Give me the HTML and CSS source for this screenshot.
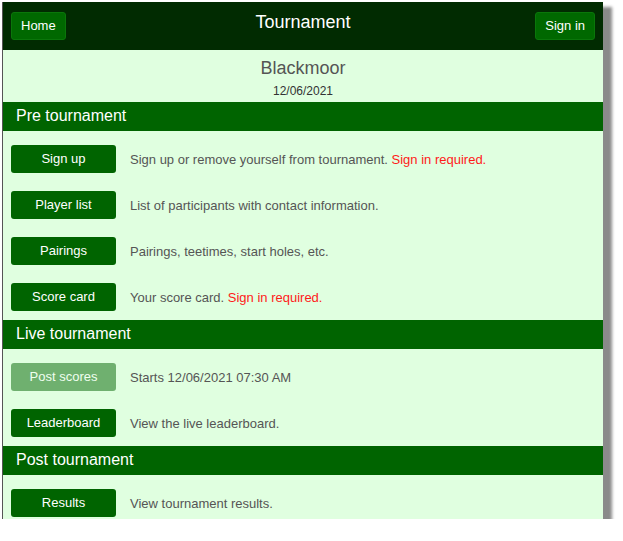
FILE: index.html
```html
<!DOCTYPE html>
<html>
<head>
<meta charset="utf-8">
<link rel="stylesheet" href="styles.css">
</head>
<body>
<div class="window">
  <header class="topbar">
    <div class="left"><a class="hbtn">Home</a></div>
    <div class="title">Tournament</div>
    <div class="right"><a class="hbtn">Sign in</a></div>
  </header>
  <div class="event">
    <div class="name">Blackmoor</div>
    <div class="date">12/06/2021</div>
  </div>
  <section>
    <h2 class="bar">Pre tournament</h2>
    <div class="rows">
      <div class="row"><a class="btn">Sign up</a><span class="desc">Sign up or remove yourself from tournament. <span class="req">Sign in required.</span></span></div>
      <div class="row"><a class="btn">Player list</a><span class="desc">List of participants with contact information.</span></div>
      <div class="row"><a class="btn">Pairings</a><span class="desc">Pairings, teetimes, start holes, etc.</span></div>
      <div class="row"><a class="btn">Score card</a><span class="desc">Your score card. <span class="req">Sign in required.</span></span></div>
    </div>
  </section>
  <section>
    <h2 class="bar">Live tournament</h2>
    <div class="rows">
      <div class="row"><a class="btn disabled">Post scores</a><span class="desc">Starts 12/06/2021 07:30 AM</span></div>
      <div class="row"><a class="btn">Leaderboard</a><span class="desc">View the live leaderboard.</span></div>
    </div>
  </section>
  <section>
    <h2 class="bar">Post tournament</h2>
    <div class="rows">
      <div class="row"><a class="btn">Results</a><span class="desc">View tournament results.</span></div>
    </div>
  </section>
</div>
</body>
</html>
```

FILE: styles.css
```css
html, body {
  margin: 0;
  padding: 0;
  background: #ffffff;
}
body {
  padding: 2px 0 0 2px;
  font-family: "Liberation Sans", Arial, sans-serif;
}
.window {
  width: 600px;
  height: 517px;
  overflow: hidden;
  background: #e0ffe0;
  border-left: 1px solid #555;
  box-shadow: 7px 7px 3px 2px #8a8a8a;
}
.topbar {
  height: 48px;
  box-sizing: border-box;
  background: #012b01;
  display: grid;
  grid-template-columns: 1fr auto 1fr;
  align-items: start;
  padding: 10px 8px 0 8px;
}
.right {
  display: flex;
  justify-content: flex-end;
}
.title {
  color: #ffffff;
  font-size: 18px;
  line-height: 21px;
}
.hbtn {
  display: inline-block;
  height: 28px;
  line-height: 26px;
  box-sizing: border-box;
  padding: 0 9px;
  background: #006800;
  border: 1px solid #0a760a;
  border-radius: 3px;
  color: #ffffff;
  font-size: 13px;
}
.event {
  height: 52px;
  box-sizing: border-box;
  padding-top: 7px;
  text-align: center;
}
.name {
  font-size: 18px;
  line-height: 22px;
  color: #555555;
}
.date {
  font-size: 12px;
  line-height: 16px;
  margin-top: 4px;
  color: #333333;
}
.bar {
  margin: 0;
  height: 29px;
  line-height: 28px;
  background: #006400;
  color: #ffffff;
  font-size: 16px;
  font-weight: normal;
  padding-left: 13px;
}
.rows {
  display: flex;
  flex-direction: column;
  gap: 18px;
  padding: 14px 0 9px 8px;
}
.row {
  display: flex;
  align-items: center;
}
.btn {
  flex: none;
  width: 105px;
  height: 28px;
  line-height: 28px;
  background: #006400;
  border-radius: 3px;
  color: #ffffff;
  font-size: 13px;
  text-align: center;
}
.btn.disabled {
  opacity: 0.5;
}
.desc {
  margin-left: 14px;
  font-size: 13px;
  color: #555555;
}
.req {
  color: #ff1a1a;
}
```
